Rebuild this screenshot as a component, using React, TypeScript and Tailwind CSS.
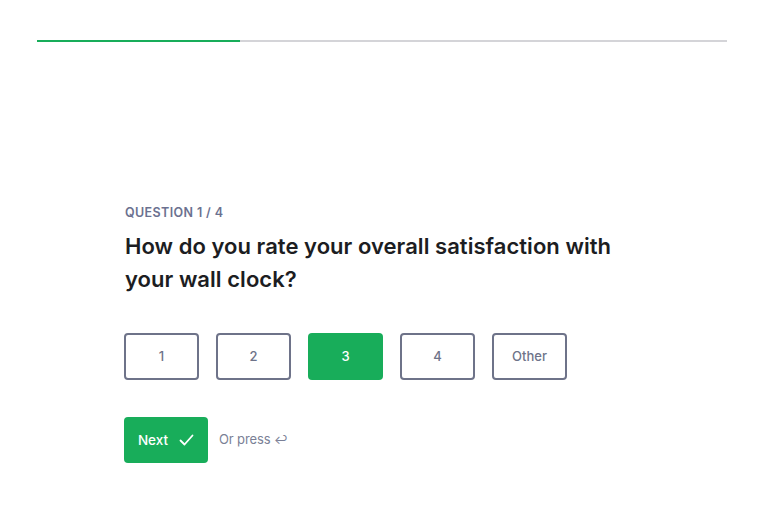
import React from "react";

export default function App() {
  const opts = ["1", "2", "3", "4", "Other"];
  return (
    <div className="w-[767px] h-[506px] bg-white" style={{ fontFamily: "Inter, 'Noto Sans', sans-serif" }}>
      <div className="pt-[40px] px-[37px]">
        <div className="flex h-[2px] w-[690px] bg-[#d4d4d8]">
          <div className="h-full w-[203px] bg-[#18ad5a]" />
        </div>
      </div>
      <div className="pl-[125px] pt-[163px]">
        <div className="text-[12.5px] leading-[16px] font-semibold tracking-[0.03em] text-[#6b7190]">QUESTION 1 / 4</div>
        <h1 className="mt-[9px] text-[22px] leading-[33px] font-semibold text-[#1c1d22] w-[520px] tracking-[0.002em]">
          How do you rate your overall satisfaction with your wall clock?
        </h1>
        <div className="mt-[37px] flex gap-[17px] -ml-[1px]">
          {opts.map((o) => (
            <div
              key={o}
              className={
                o === "3"
                  ? "w-[75px] h-[47px] rounded-[4px] bg-[#18ad5a] text-white flex items-center justify-center text-[13px] font-medium"
                  : "w-[75px] h-[47px] rounded-[4px] border-2 border-[#6e7389] text-[#6e7389] flex items-center justify-center text-[13px] font-medium"
              }
            >
              {o}
            </div>
          ))}
        </div>
        <div className="mt-[37px] flex items-center -ml-[1px]">
          <div className="w-[84px] h-[46px] rounded-[4px] bg-[#18ad5a] text-white flex items-center justify-center gap-[11px] text-[13.5px] font-medium">
            <span>Next</span>
            <svg width="15" height="12" viewBox="0 0 15 12" fill="none">
              <path d="M1.5 6.5 L5.5 10.5 L13.5 1.5" stroke="white" strokeWidth="1.8" strokeLinecap="round" strokeLinejoin="round" />
            </svg>
          </div>
          <span className="ml-[11px] text-[13px] text-[#7a7f96] tracking-[-0.01em]">Or press <span className="text-[12px]">↩</span></span>
        </div>
      </div>
    </div>
  );
}
